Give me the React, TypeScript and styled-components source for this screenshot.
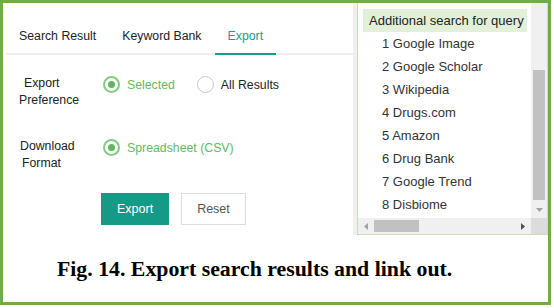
import React from 'react';
import styled, { createGlobalStyle } from 'styled-components';

const GlobalStyle = createGlobalStyle`
    body {
        margin: 0;
        background: #ffffff;
        font-family: "Liberation Sans", Arial, sans-serif;
    }
`;

const Frame = styled.div`
    width: 551px;
    height: 305px;
    box-sizing: border-box;
    border: 3px solid #70ad47;
    display: flex;
    flex-direction: column;
    background: #ffffff;
`;

const Top = styled.div`
    display: flex;
    height: 232px;
`;

const LeftPanel = styled.div`
    width: 350px;
    padding-left: 3px;
    box-sizing: border-box;
`;

const TabBar = styled.div`
    display: flex;
    margin-top: 17px;
    border-bottom: 2px solid #eeeeee;
`;

const Tab = styled.div<{ $active?: boolean }>`
    padding: 0 13px;
    height: 33px;
    line-height: 33px;
    font-size: 12.3px;
    color: ${(p) => (p.$active ? '#1a9c8c' : '#222222')};
    border-bottom: 2px solid ${(p) => (p.$active ? '#1a9c8c' : 'transparent')};
    margin-bottom: -2px;
`;

const Form = styled.div`
    margin-left: 13px;
    margin-top: 20px;
    display: flex;
    flex-direction: column;
`;

const Row = styled.div<{ $gap?: number }>`
    display: flex;
    margin-bottom: ${(p) => p.$gap ?? 0}px;
`;

const Label = styled.div`
    width: 84px;
    font-size: 12.3px;
    line-height: 17px;
    color: #222222;
`;

const LabelLine = styled.div<{ $indent?: number }>`
    padding-left: ${(p) => p.$indent ?? 0}px;
`;

const Options = styled.div`
    display: flex;
    align-items: center;
    height: 17px;
    margin-top: 1px;
    gap: 22px;
`;

const Option = styled.div<{ $checked?: boolean }>`
    display: flex;
    align-items: center;
    gap: 7px;
    font-size: 12.3px;
    color: ${(p) => (p.$checked ? '#62bb62' : '#222222')};
`;

const RadioCircle = styled.span<{ $checked?: boolean }>`
    width: 17px;
    height: 17px;
    box-sizing: border-box;
    border-radius: 50%;
    border: ${(p) => (p.$checked ? '2px solid #86c986' : '1px solid #c8c8c8')};
    display: flex;
    align-items: center;
    justify-content: center;
    &::after {
        content: '';
        display: ${(p) => (p.$checked ? 'block' : 'none')};
        width: 7px;
        height: 7px;
        border-radius: 50%;
        background: #5cb85c;
    }
`;

const Buttons = styled.div`
    display: flex;
    gap: 12px;
    margin-left: 82px;
`;

const Button = styled.button<{ $primary?: boolean }>`
    height: 32px;
    padding: 0 15px;
    font-family: "Liberation Sans", Arial, sans-serif;
    font-size: 12.5px;
    border-radius: 0;
    border: 1px solid ${(p) => (p.$primary ? '#159a88' : '#dddddd')};
    background: ${(p) => (p.$primary ? '#159a88' : '#ffffff')};
    color: ${(p) => (p.$primary ? '#ffffff' : '#555555')};
`;

const RightPanel = styled.div`
    flex: 1;
    background: #f0f0f0;
    padding-left: 4px;
`;

const ListBox = styled.div`
    height: 100%;
    box-sizing: border-box;
    background: #ffffff;
    border-left: 1px solid #c5e0b4;
    border-right: 1px solid #c5e0b4;
    border-bottom: 1px solid #c5e0b4;
    display: grid;
    grid-template-columns: 1fr 16px;
    grid-template-rows: 1fr 16px;
`;

const ListContent = styled.div`
    overflow: hidden;
    padding: 6px 0 0 5px;
    font-size: 13px;
    color: #333333;
    white-space: nowrap;
`;

const ListHeader = styled.div`
    width: 164px;
    height: 23px;
    line-height: 23px;
    padding-left: 6px;
    box-sizing: border-box;
    background: #e2efd9;
    color: #222222;
`;

const ListItem = styled.div`
    height: 23px;
    line-height: 23px;
    padding-left: 19px;
`;

const VScroll = styled.div`
    background: #f0f0f0;
    display: flex;
    flex-direction: column;
    align-items: center;
`;

const VThumb = styled.div`
    width: 12px;
    background: #c1c1c1;
`;

const Spacer = styled.div`
    flex: 1;
`;

const ArrowBox = styled.div`
    width: 16px;
    height: 16px;
    display: flex;
    align-items: center;
    justify-content: center;
`;

const HScroll = styled.div`
    background: #f0f0f0;
    display: flex;
    align-items: center;
`;

const HThumb = styled.div`
    height: 12px;
    background: #c1c1c1;
`;

const Corner = styled.div`
    background: #dcdcdc;
`;

const Caption = styled.div`
    flex: 1;
    display: flex;
    align-items: center;
    padding-left: 54px;
    padding-top: 2px;
    font-family: "Liberation Serif", "Times New Roman", serif;
    font-weight: bold;
    font-size: 21.8px;
    color: #000000;
`;

const Arrow = ({ dir, color }: { dir: 'down' | 'left' | 'right'; color: string }) => {
    const pts = {
        down: '0,0 7,0 3.5,4',
        left: '4,0 4,7 0,3.5',
        right: '0,0 0,7 4,3.5',
    }[dir];
    const w = dir === 'down' ? 7 : 4;
    const h = dir === 'down' ? 4 : 7;
    return (
        <svg width={w} height={h} viewBox={`0 0 ${w} ${h}`}>
            <polygon points={pts} fill={color} />
        </svg>
    );
};

const searches = [
    'Google Image',
    'Google Scholar',
    'Wikipedia',
    'Drugs.com',
    'Amazon',
    'Drug Bank',
    'Google Trend',
    'Disbiome',
];

export default function App() {
    return (
        <>
            <GlobalStyle />
            <Frame>
                <Top>
                    <LeftPanel>
                        <TabBar>
                            <Tab>Search Result</Tab>
                            <Tab>Keyword Bank</Tab>
                            <Tab $active>Export</Tab>
                        </TabBar>
                        <Form>
                            <Row $gap={29}>
                                <Label>
                                    <LabelLine $indent={5}>Export</LabelLine>
                                    <LabelLine>Preference</LabelLine>
                                </Label>
                                <Options>
                                    <Option $checked>
                                        <RadioCircle $checked />
                                        Selected
                                    </Option>
                                    <Option>
                                        <RadioCircle />
                                        All Results
                                    </Option>
                                </Options>
                            </Row>
                            <Row $gap={21}>
                                <Label>
                                    <LabelLine $indent={1}>Download</LabelLine>
                                    <LabelLine $indent={3}>Format</LabelLine>
                                </Label>
                                <Options>
                                    <Option $checked>
                                        <RadioCircle $checked />
                                        Spreadsheet (CSV)
                                    </Option>
                                </Options>
                            </Row>
                            <Buttons>
                                <Button $primary>Export</Button>
                                <Button>Reset</Button>
                            </Buttons>
                        </Form>
                    </LeftPanel>
                    <RightPanel>
                        <ListBox>
                            <ListContent>
                                <ListHeader>Additional search for query</ListHeader>
                                {searches.map((s, i) => (
                                    <ListItem key={s}>
                                        {i + 1} {s}
                                    </ListItem>
                                ))}
                            </ListContent>
                            <VScroll>
                                <div style={{ height: 67 }} />
                                <VThumb style={{ height: 130 }} />
                                <Spacer />
                                <ArrowBox>
                                    <Arrow dir="down" color="#a3a3a3" />
                                </ArrowBox>
                            </VScroll>
                            <HScroll>
                                <ArrowBox>
                                    <Arrow dir="left" color="#a3a3a3" />
                                </ArrowBox>
                                <HThumb style={{ width: 45 }} />
                                <Spacer />
                                <ArrowBox>
                                    <Arrow dir="right" color="#505050" />
                                </ArrowBox>
                            </HScroll>
                            <Corner />
                        </ListBox>
                    </RightPanel>
                </Top>
                <Caption>Fig. 14. Export search results and link out.</Caption>
            </Frame>
        </>
    );
}
